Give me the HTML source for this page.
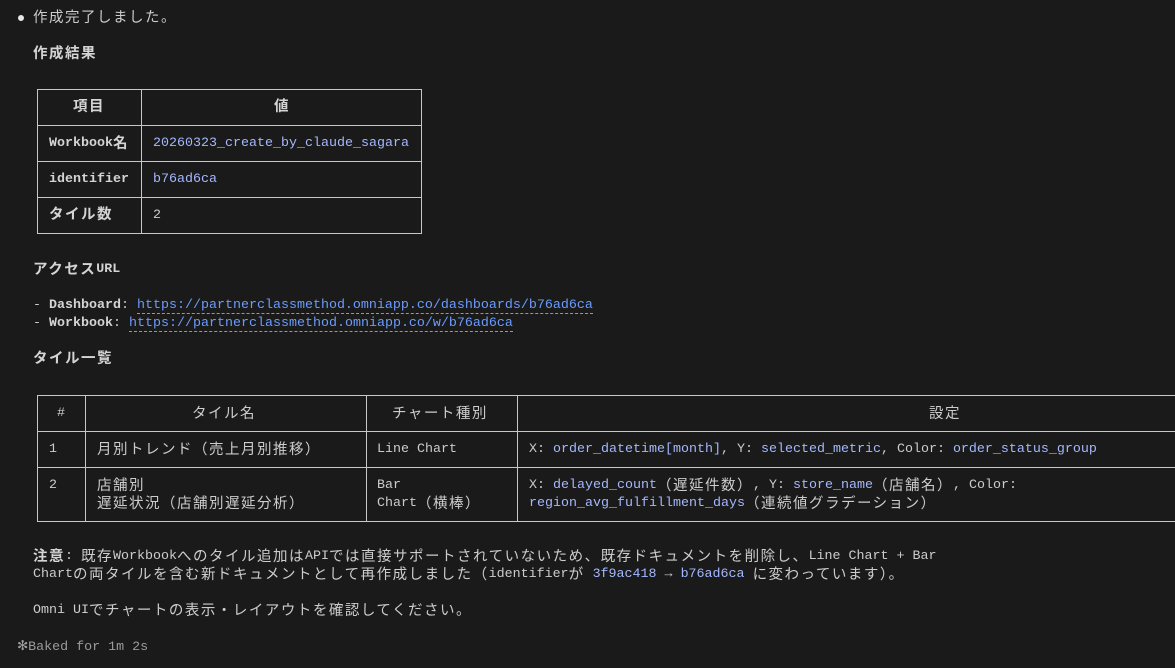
<!DOCTYPE html>
<html><head><meta charset="utf-8"><style>
*{margin:0;padding:0;box-sizing:border-box}
body{width:1175px;height:668px;background:#1a1a1a;color:#cccccc;font-family:"Liberation Mono","Noto Sans CJK JP",monospace;font-size:13.33px;position:relative;overflow:hidden}
.t{position:absolute;white-space:pre;line-height:18px}
.j{font-size:14.5px;letter-spacing:1.5px;font-family:"Noto Sans CJK JP",sans-serif;line-height:0;position:relative;top:2px}
.b{font-weight:bold;color:#d4d4d4}
.c{color:#a4b8ff}
.u{color:#6a9cff;border-bottom:1px dashed #6a9cff}
.bx{position:absolute;border:1px solid #c8c8c8}
.h{position:absolute;height:1px;background:#c8c8c8}
.v{position:absolute;width:1px;background:#c8c8c8}
</style></head><body>
<div style="position:absolute;left:18px;top:15px;width:6px;height:6px;border-radius:50%;background:#e8e8e8"></div>
<div class="t" style="left:33px;top:9px"><span class="j">作成完了しました。</span></div>
<div class="t b" style="left:33px;top:45px"><span class="j">作成結果</span></div>

<div class="bx" style="left:37px;top:89px;width:385px;height:145px"></div>
<div class="h" style="left:37px;top:125px;width:385px"></div>
<div class="h" style="left:37px;top:161px;width:385px"></div>
<div class="h" style="left:37px;top:197px;width:385px"></div>
<div class="v" style="left:141px;top:89px;height:145px"></div>
<div class="t b" style="left:73px;top:98px"><span class="j">項目</span></div>
<div class="t b" style="left:274px;top:98px"><span class="j">値</span></div>
<div class="t b" style="left:49px;top:135px">Workbook<span class="j">名</span></div>
<div class="t c" style="left:153px;top:135px">20260323_create_by_claude_sagara</div>
<div class="t b" style="left:49px;top:171px">identifier</div>
<div class="t c" style="left:153px;top:171px">b76ad6ca</div>
<div class="t b" style="left:49px;top:206px"><span class="j">タイル数</span></div>
<div class="t" style="left:153px;top:207px">2</div>

<div class="t b" style="left:33px;top:261px"><span class="j">アクセス</span>URL</div>
<div class="t" style="left:33px;top:297px">- <span class="b">Dashboard</span>: <span class="u">https://partnerclassmethod.omniapp.co/dashboards/b76ad6ca</span></div>
<div class="t" style="left:33px;top:315px">- <span class="b">Workbook</span>: <span class="u">https://partnerclassmethod.omniapp.co/w/b76ad6ca</span></div>

<div class="t b" style="left:33px;top:350px"><span class="j">タイル一覧</span></div>

<div class="bx" style="left:37px;top:395px;width:1150px;height:127px"></div>
<div class="h" style="left:37px;top:431px;width:1150px"></div>
<div class="h" style="left:37px;top:467px;width:1150px"></div>
<div class="v" style="left:85px;top:395px;height:127px"></div>
<div class="v" style="left:366px;top:395px;height:127px"></div>
<div class="v" style="left:517px;top:395px;height:127px"></div>
<div class="t" style="left:57px;top:405px">#</div>
<div class="t" style="left:192px;top:405px"><span class="j">タイル名</span></div>
<div class="t" style="left:392px;top:405px"><span class="j">チャート種別</span></div>
<div class="t" style="left:929px;top:405px"><span class="j">設定</span></div>
<div class="t" style="left:49px;top:441px">1</div>
<div class="t" style="left:97px;top:441px"><span class="j">月別トレンド（売上月別推移）</span></div>
<div class="t" style="left:377px;top:441px">Line Chart</div>
<div class="t" style="left:529px;top:441px">X: <span class="c">order_datetime[month]</span>, Y: <span class="c">selected_metric</span>, Color: <span class="c">order_status_group</span></div>
<div class="t" style="left:49px;top:477px">2</div>
<div class="t" style="left:97px;top:477px"><span class="j">店舗別</span>
<span class="j">遅延状況（店舗別遅延分析）</span></div>
<div class="t" style="left:377px;top:477px">Bar
Chart<span class="j">（横棒）</span></div>
<div class="t" style="left:529px;top:477px">X: <span class="c">delayed_count</span><span class="j">（遅延件数）</span>, Y: <span class="c">store_name</span><span class="j">（店舗名）</span>, Color:
<span class="c">region_avg_fulfillment_days</span><span class="j">（連続値グラデーション）</span></div>

<div class="t" style="left:33px;top:548px"><span class="b j">注意</span>: <span class="j">既存</span>Workbook<span class="j">へのタイル追加は</span>API<span class="j">では直接サポートされていないため、既存ドキュメントを削除し、</span>Line Chart + Bar
Chart<span class="j">の両タイルを含む新ドキュメントとして再作成しました（</span>identifier<span class="j">が</span> <span class="c">3f9ac418</span> → <span class="c">b76ad6ca</span> <span class="j">に変わっています）。</span></div>
<div class="t" style="left:33px;top:602px">Omni UI<span class="j">でチャートの表示・レイアウトを確認してください。</span></div>
<div class="t" style="left:17px;top:639px;color:#9a9a9a"><span style="color:#a0a0a0">✻</span>Baked for 1m 2s</div>
</body></html>
